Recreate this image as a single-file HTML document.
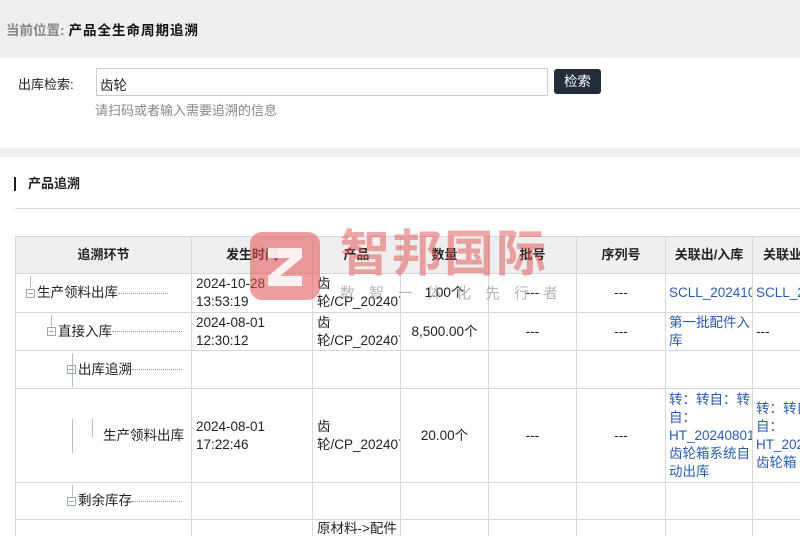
<!DOCTYPE html>
<html><head><meta charset="utf-8"><style>
*{margin:0;padding:0;box-sizing:border-box}
body{width:800px;height:533px;overflow:hidden;background:#fff;font-family:"Liberation Sans","Noto Sans CJK SC",sans-serif;font-size:13px;color:#222;position:relative}
.top{height:58px;background:#efefef;padding:19px 0 0 6px;font-size:13.5px}
.top .a{color:#888;font-weight:bold}.top .b{font-weight:bold;color:#111;margin-left:4px;letter-spacing:1px}
.lbl{position:absolute;left:18px;top:74px}
.inp{position:absolute;left:96px;top:68px;width:452px;height:28px;border:1px solid #ccc;padding:5px 3px;font-size:13.5px}
.btn{position:absolute;left:554px;top:69px;width:47px;height:25px;background:#222d3a;color:#fff;border-radius:3px;text-align:center;line-height:25px;font-size:13.5px}
.hint{position:absolute;left:95px;top:100px;color:#888;font-size:13px}
.band{position:absolute;left:0;top:148px;width:800px;height:9px;background:#efefef}
.tt{position:absolute;left:14px;top:177px;font-weight:bold;border-left:2px solid #222;padding-left:12px;line-height:14px}
.hr{position:absolute;left:15px;top:208px;width:785px;height:1px;background:#ddd}
.wrap{position:absolute;left:15px;top:236px;width:785px;height:300px;overflow:hidden}
table{border-collapse:collapse;table-layout:fixed;width:820px}
td,th{border:1px solid #d8d8d8;font-size:13.5px;line-height:18px;text-align:center;vertical-align:middle;overflow:hidden;white-space:nowrap}
th{background:#efefef;height:37px;font-weight:bold;font-size:13px}
td.l{text-align:left;padding-left:4px}
.lnk{color:#2a5db0;text-align:left;padding-left:3px;white-space:normal}
.tree{text-align:left;position:relative}
.bx{display:inline-block;width:9px;height:9px;border:1px solid #9ab;vertical-align:middle;margin-right:2px;position:relative}
.bx:after{content:"";position:absolute;left:1px;top:3px;width:5px;height:1px;background:#9ab}
.dl{display:inline-block;border-top:1px dotted #999;vertical-align:middle}
.vl{position:absolute;width:1px;background:#bbb}
.wm{position:absolute;left:250px;top:232px;width:70px;height:68px;background:rgba(225,80,80,.55);border-radius:12px;overflow:hidden}
.wt{position:absolute;left:340px;top:226px;font-size:50px;font-weight:bold;color:rgba(225,80,80,.5);letter-spacing:2px;line-height:56px}
.ws{position:absolute;left:340px;top:282px;font-size:15px;color:rgba(150,150,150,.7);letter-spacing:14px}
</style></head><body>
<div class="top"><span class="a">当前位置:</span><span class="b">产品全生命周期追溯</span></div>
<div class="lbl">出库检索:</div>
<div class="inp">齿轮</div>
<div class="btn">检索</div>
<div class="hint">请扫码或者输入需要追溯的信息</div>
<div class="band"></div>
<div class="tt">产品追溯</div>
<div class="hr"></div>
<div class="wrap">
<table>
<colgroup><col style="width:176px"><col style="width:121px"><col style="width:88px"><col style="width:88px"><col style="width:88px"><col style="width:89px"><col style="width:87px"><col style="width:93px"></colgroup>
<tr><th>追溯环节</th><th>发生时间</th><th>产品</th><th>数量</th><th>批号</th><th>序列号</th><th>关联出/入库</th><th style="text-align:left;padding-left:10px">关联业务</th></tr>
<tr style="height:39px"><td class="tree" style="padding-left:10px"><div class="vl" style="left:14px;top:2px;height:12px"></div><span class="bx"></span>生产领料出库<span class="dl" style="width:50px"></span></td><td class="l">2024-10-28<br>13:53:19</td><td class="l">齿<br>轮/CP_202407</td><td>1.00个</td><td>---</td><td>---</td><td class="lnk">SCLL_2024102</td><td class="lnk">SCLL_2</td></tr>
<tr style="height:38px"><td class="tree" style="padding-left:31px"><div class="vl" style="left:35px;top:2px;height:12px"></div><span class="bx"></span>直接入库<span class="dl" style="width:70px"></span></td><td class="l">2024-08-01<br>12:30:12</td><td class="l">齿<br>轮/CP_202407</td><td>8,500.00个</td><td>---</td><td>---</td><td class="lnk">第一批配件入<br>库</td><td class="lnk" style="color:#222">---</td></tr>
<tr style="height:38px"><td class="tree" style="padding-left:51px"><div class="vl" style="left:56px;top:2px;height:34px"></div><span class="bx"></span>出库追溯<span class="dl" style="width:50px"></span></td><td></td><td></td><td></td><td></td><td></td><td></td><td></td></tr>
<tr style="height:94px"><td class="tree" style="padding-left:87px"><div class="vl" style="left:56px;top:30px;height:34px"></div><div class="vl" style="left:76px;top:30px;height:18px"></div>生产领料出库</td><td class="l">2024-08-01<br>17:22:46</td><td class="l">齿<br>轮/CP_202407</td><td>20.00个</td><td>---</td><td>---</td><td class="lnk">转：转自：转<br>自：<br>HT_20240801<br>齿轮箱系统自<br>动出库</td><td class="lnk">转：转自<br>自：<br>HT_202<br>齿轮箱</td></tr>
<tr style="height:37px"><td class="tree" style="padding-left:51px"><div class="vl" style="left:56px;top:2px;height:12px"></div><span class="bx"></span>剩余库存<span class="dl" style="width:50px"></span></td><td></td><td></td><td></td><td></td><td></td><td></td><td></td></tr>
<tr style="height:40px"><td></td><td></td><td class="l" style="vertical-align:top">原材料->配件</td><td></td><td></td><td></td><td></td><td></td></tr>
</table>
</div>
<div class="wm"><svg width="70" height="68"><path d="M18 16H52V26L30 44H52V54H18V44L40 26H18Z" fill="rgba(255,255,255,.85)"/></svg></div>
<div class="wt">智邦国际</div>
<div class="ws">数智一体化先行者</div>
</body></html>
